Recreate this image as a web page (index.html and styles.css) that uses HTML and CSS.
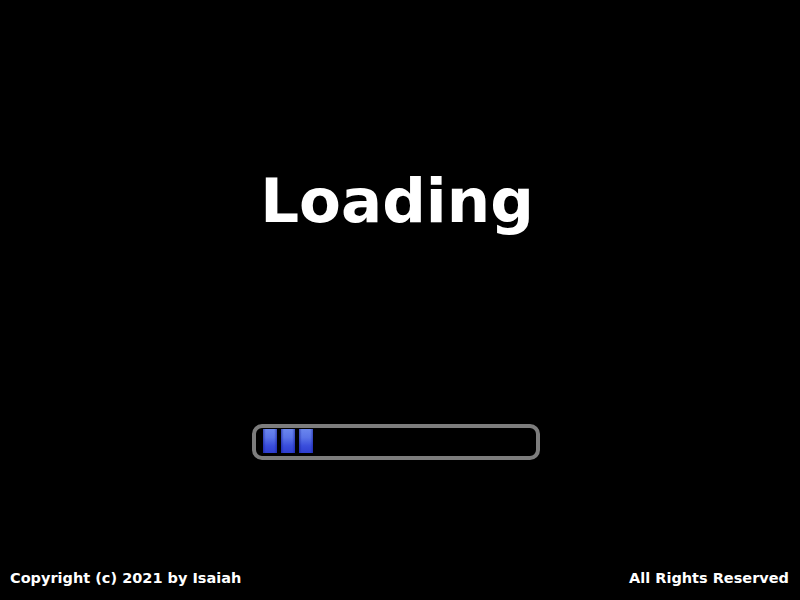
FILE: index.html
```html
<!DOCTYPE html>
<html>
<head>
<meta charset="utf-8">
<link rel="stylesheet" href="styles.css">
</head>
<body>
<div class="screen">
  <h1 class="title">Loading</h1>
  <div class="bar">
    <span class="seg"></span>
    <span class="seg"></span>
    <span class="seg"></span>
  </div>
  <div class="footer">
    <span>Copyright (c) 2021 by Isaiah</span>
    <span>All Rights Reserved</span>
  </div>
</div>
</body>
</html>
```
FILE: styles.css
```css
html, body {
  margin: 0;
  padding: 0;
  background: #000;
}
.screen {
  width: 800px;
  height: 600px;
  display: flex;
  flex-direction: column;
  align-items: center;
  font-family: "DejaVu Sans", Verdana, sans-serif;
  font-weight: bold;
  color: #fff;
}
.title {
  margin: 166px 6px 0 0;
  font-size: 61px;
  line-height: 70px;
  font-weight: bold;
}
.bar {
  margin: 188px 8px 0 0;
  width: 273px;
  height: 27px;
  border: 4px solid #7d7d7d;
  border-radius: 10px;
  display: flex;
  gap: 4px;
  padding: 1px 0 0 7px;
  box-sizing: content-box;
}
.seg {
  width: 14px;
  height: 24px;
  background:
    linear-gradient(90deg, rgba(20,30,150,0.55) 0, rgba(20,30,150,0) 20%, rgba(20,30,150,0) 80%, rgba(20,30,150,0.55) 100%),
    linear-gradient(180deg, #6a86ee 0%, #5a74e8 35%, #3a4edc 70%, #2e3ed0 100%);
}
.footer {
  margin-top: auto;
  margin-bottom: 13px;
  align-self: stretch;
  display: flex;
  justify-content: space-between;
  padding: 0 11px 0 10px;
  font-size: 14.5px;
  line-height: 17px;
}
```
